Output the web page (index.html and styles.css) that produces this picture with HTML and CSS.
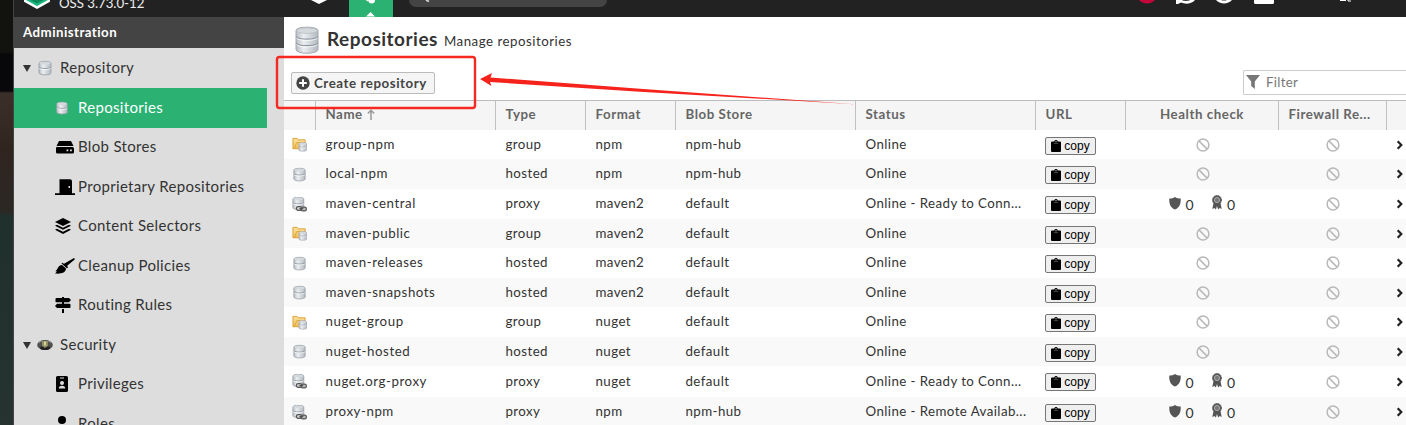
FILE: index.html
```
<!DOCTYPE html>
<html lang="en">
<head>
<meta charset="utf-8">
<title>Repositories</title>
<link rel="stylesheet" href="styles.css">
</head>
<body>
<svg class="defs" width="0" height="0">
  <defs>
    <linearGradient id="metal" x1="0" x2="1"><stop offset="0" stop-color="#b6bcc2"/><stop offset=".35" stop-color="#eceff1"/><stop offset="1" stop-color="#b2b8c0"/></linearGradient>
    <linearGradient id="gold" x1="0" y1="0" x2="0" y2="1"><stop offset="0" stop-color="#fbe3a0"/><stop offset="1" stop-color="#efbd52"/></linearGradient>
    <symbol id="db" viewBox="0 0 16 16">
      <path d="M2 3.2C2 .8 14 .8 14 3.2v9.700c0 2.600-12 2.600-12 0z" fill="url(#metal)" stroke="#9ca3aa" stroke-width=".9"/>
      <ellipse cx="8" cy="3.200" rx="5.500" ry="1.400" fill="#d3d9dd"/>
      <path d="M2.200 7.300c1.500 1.700 10.100 1.700 11.600 0" fill="none" stroke="#8d949c" stroke-width=".9"/>
      <path d="M2.200 8.300c1.500 1.700 10.100 1.700 11.600 0" fill="none" stroke="#fff" stroke-width=".7"/>
    </symbol>
    <symbol id="group" viewBox="0 0 16 16">
      <path d="M1 1.500h4.500l1 1.500H14v9.500H1z" fill="url(#gold)" stroke="#dc9f34"/>
      <path d="M2.500 12.500L5 6h9" fill="none" stroke="#dfa33d"/>
      <use href="#db" x="6" y="5" width="11" height="11"/>
    </symbol>
    <symbol id="proxy" viewBox="0 0 16 16">
      <use href="#db" x="-1" y="-1" width="15.500" height="15.500"/>
      <rect x="4.700" y="10.200" width="5.600" height="4" rx="1.700" fill="#ccc" stroke="#555" stroke-width="1.300"/>
      <rect x="9.700" y="10.700" width="5.600" height="4" rx="1.700" fill="#bbb" stroke="#555" stroke-width="1.300"/>
      <path d="M8 12.500h4" stroke="#444" stroke-width="1.200"/>
    </symbol>
    <symbol id="ban" viewBox="0 0 14 14"><circle cx="7" cy="7" r="5.900" fill="none" stroke="#b9b9b9" stroke-width="1.500"/><path d="M2.900 2.900l8.200 8.200" stroke="#b9b9b9" stroke-width="1.500"/></symbol>
    <symbol id="clip" viewBox="0 0 10 12"><path d="M1 1.500h2.200a1.850 1.850 0 0 1 3.600 0H9a1 1 0 0 1 1 1V11a1 1 0 0 1-1 1H1a1 1 0 0 1-1-1V2.500a1 1 0 0 1 1-1z"/><path d="M2.800 3.400h4.400" stroke="#777" stroke-width=".6"/><circle cx="5" cy="1.700" r=".6" fill="#ddd"/></symbol>
    <symbol id="chev" viewBox="0 0 8 10"><path d="M1.700 1.300L5.300 5 1.700 8.700" fill="none" stroke="#222" stroke-width="2.200"/></symbol>
    <symbol id="shield" viewBox="0 0 12 13"><path d="M6 0c1.600 1.200 3.500 1.600 5.700 1.600C11.900 6.500 11 10.500 6 12.600 1 10.500.1 6.500.3 1.600 2.500 1.600 4.400 1.200 6 0z" fill="#555"/></symbol>
    <symbol id="award" viewBox="0 0 12 15"><path d="M2.500 8L1.300 14l2.100-1 1.500 1.500L6 11l1.100 3.500L8.600 13l2.100 1L9.500 8z" fill="#555"/><circle cx="6" cy="5" r="4.500" fill="#555" stroke="#555" stroke-dasharray="1.400 .8"/><circle cx="6" cy="5" r="2.600" fill="#777" stroke="#bbb" stroke-width=".8"/></symbol>
  </defs>
</svg>
<div class="app">
  <div class="desk"></div>
  <div class="window">
    <header class="top">
      <div class="brand">
        <svg class="hex" width="26" height="9" viewBox="0 0 26 9"><path d="M1 0v.8L13 7.500 25 .8V0" fill="#1eb980" stroke="#fff" stroke-width="2.500"/><path d="M6 0l7 3.600L20 0z" fill="#0c8a5d"/></svg>
        <span class="version">OSS 3.73.0-12</span>
      </div>
      <svg class="cube" width="16" height="4" viewBox="0 0 16 4"><path d="M0 0h16L8 4z" fill="#fff"/></svg>
      <div class="mode">
        <svg width="44" height="17" viewBox="0 0 44 17"><path d="M19 0h7c.5 4.500-6.500 5-7 0z" fill="#fff"/><path d="M16.500 0h3l-.5 1.500z" fill="#fff"/><path d="M17 16.500L21.500 12l4.500 4.500z" fill="#fff"/></svg>
      </div>
      <div class="search"><svg width="100" height="4" viewBox="0 0 100 4"><path d="M17 0l3 1.500" stroke="#ddd" stroke-width="1.500"/><path d="M101 0v2" stroke="#999"/></svg></div>
      <svg class="tools" width="220" height="6" viewBox="0 0 220 6">
        <path d="M0 0h16c-4 4.500-12 4.500-16 0z" fill="#c5073c"/>
        <path d="M37 4V0h6c2 1.200 6 1.200 8 0h5c-3.500 4-9.500 4.500-14 2.500L39 4z" fill="#fff"/>
        <path d="M77 0h5c2 .8 4 .8 6 0h5c-4 4.500-12 4.500-16 0z" fill="#fff"/>
        <path d="M115 0h20v2.500q0 1.500-1.500 1.500h-17q-1.500 0-1.500-1.500z" fill="#fff"/>
        <path d="M201 .5h6M209 0v1h3" stroke="#fff" fill="none"/>
      </svg>
    </header>
    <div class="main">
      <nav class="side">
        <h2 class="side-title">Administration</h2>
        <div class="node root"><i class="tri"></i><svg class="ni" width="16" height="16"><use href="#db"/></svg><span class="tx">Repository</span></div>
        <div class="node leaf on"><svg class="ni" width="14" height="14"><use href="#db"/></svg><span class="tx">Repositories</span></div>
        <div class="node leaf short"><svg class="ni" width="20" height="14" viewBox="0 0 20 14"><path d="M4 1h12l2.500 5h-17z"/><path fill-rule="evenodd" d="M2 7h15.500q1.500 0 1.500 1.500V12q0 1.500-1.500 1.500h-15Q1 13.500 1 12V8q0-1 1-1zm9.500 2.500v1.800h1.800V9.500zm3.500 0v1.800h1.800V9.500z"/></svg><span class="tx">Blob Stores</span></div>
        <div class="node leaf"><svg class="ni" width="20" height="16" viewBox="0 0 20 16"><path fill-rule="evenodd" d="M4.500.3H15q2 0 2 2v11.900h3V16H0v-1.800h4.500zM13.500 7v2H15V7z"/></svg><span class="tx">Proprietary Repositories</span></div>
        <div class="node leaf short"><svg class="ni" width="16" height="16" viewBox="0 0 16 16"><path d="M8 0l8 4-8 4-8-4zM2 6.800L8 9.700l6-2.900 2 1-8 4-8-4zM2 10.800l6 2.900 6-2.900 2 1L8 16l-8-4.200z"/></svg><span class="tx">Content Selectors</span></div>
        <div class="node leaf"><svg class="ni" width="20" height="16" viewBox="0 0 20 16"><path d="M0 15.500l2-2-1.600-.2C3 11.500 2.500 7.500 7 7l4 3.600c0 4.400-5.500 5.500-11 4.900z"/><path d="M7 4.800l2 1L19 0l1 1.300-7.800 6.500.8 2-1.200.5L6.500 5.500z"/></svg><span class="tx">Cleanup Policies</span></div>
        <div class="node leaf short"><svg class="ni" width="16" height="16" viewBox="0 0 16 16"><path d="M7 0h2v1h5l2 2-2 2.200H1Q.5 5.200.5 4.500V2q0-1 1-1H7zM7 5.200h2v1.600h5.500q1 0 1 1v2.200q0 1-1 1H2L0 9l2-2.200h5zM7 12h2v4H7z"/></svg><span class="tx">Routing Rules</span></div>
        <div class="node root"><i class="tri"></i><svg class="ni" width="16" height="12" viewBox="0 0 16 12"><ellipse cx="8" cy="6" rx="7.800" ry="5" fill="#4e504b"/><ellipse cx="8" cy="9" rx="5" ry="2" fill="#222"/><path d="M5 2h6v5l-3 2-3-2z" fill="#8f8e68"/><path d="M8 2.500v4" stroke="#eeeaa0" stroke-width="1.500"/><path d="M2 4q2-2 3-2M11 2q2 0 3 2" stroke="#999" fill="none"/></svg><span class="tx">Security</span></div>
        <div class="node leaf short"><svg class="ni" width="14" height="16" viewBox="0 0 14 16"><path fill-rule="evenodd" d="M2.500 0h9q1.500 0 1.500 1.500v13q0 1.500-1.500 1.500h-9Q1 16 1 14.500v-13Q1 0 2.500 0zM5 1.500v1h4v-1z"/><circle cx="7" cy="7" r="2" fill="#ddd"/><path d="M3.800 12.500q0-2.700 3.200-2.700t3.200 2.700z" fill="#ddd"/></svg><span class="tx">Privileges</span></div>
        <div class="node leaf"><svg class="ni" width="14" height="16" viewBox="0 0 14 16"><circle cx="7" cy="4" r="4"/><path d="M0 16q0-7 7-7t7 7z"/></svg><span class="tx">Roles</span></div>
      </nav>
      <section class="content">
        <div class="heading"><svg width="28" height="29" viewBox="0 0 28 29"><path d="M3 4.500C3 0 25 0 25 4.500v19c0 5-22 5-22 0z" fill="url(#metal)" stroke="#a4abb2"/><ellipse cx="14" cy="4.700" rx="10.300" ry="2.700" fill="#d4d9dd" stroke="#b4babf" stroke-width=".7"/><path d="M3 10.500c2 3.500 20 3.500 22 0M3 17c2 3.500 20 3.500 22 0" fill="none" stroke="#8d96a0" stroke-width="1.200"/><path d="M3.500 12c2 3.200 19 3.200 21 0M3.500 18.500c2 3.200 19 3.200 21 0" fill="none" stroke="#fff" stroke-width=".8"/></svg><h1>Repositories</h1><span class="sub">Manage repositories</span></div>
        <div class="bar">
          <button class="create"><svg width="14" height="14" viewBox="0 0 14 14"><circle cx="7" cy="7" r="6.700" fill="#444"/><path d="M7 3.200v7.600M3.200 7h7.600" stroke="#fff" stroke-width="2"/></svg><span>Create repository</span></button>
          <div class="filter"><svg width="14" height="14" viewBox="0 0 14 14"><path d="M0 0h14L8.800 6.500V14L5.200 11V6.500z" fill="#777"/></svg><span>Filter</span></div>
        </div>
        <div class="cols row head"><b></b><b class="sorted">Name<svg width="8" height="11" viewBox="0 0 8 11"><path d="M4 11V1.500M.8 4.500L4 1.300l3.200 3.200" fill="none" stroke="#999" stroke-width="1.500"/></svg></b><b>Type</b><b>Format</b><b>Blob Store</b><b>Status</b><b>URL</b><b class="mid">Health check</b><b class="fw">Firewall Re...</b><b></b></div>
        <div class="cols row r29"><svg class="ri"><use href="#group"/></svg><span class="name">group-npm</span><span>group</span><span>npm</span><span>npm-hub</span><span>Online</span><button class="copy"><svg><use href="#clip"/></svg>copy</button><svg class="ban"><use href="#ban"/></svg><svg class="ban"><use href="#ban"/></svg><svg class="chev"><use href="#chev"/></svg></div>
        <div class="cols row alt"><svg class="ri"><use href="#db"/></svg><span class="name">local-npm</span><span>hosted</span><span>npm</span><span>npm-hub</span><span>Online</span><button class="copy"><svg><use href="#clip"/></svg>copy</button><svg class="ban"><use href="#ban"/></svg><svg class="ban"><use href="#ban"/></svg><svg class="chev"><use href="#chev"/></svg></div>
        <div class="cols row"><svg class="ri"><use href="#proxy"/></svg><span class="name">maven-central</span><span>proxy</span><span>maven2</span><span>default</span><span>Online - Ready to Conn...</span><button class="copy"><svg><use href="#clip"/></svg>copy</button><div class="health"><svg class="sh"><use href="#shield"/></svg><em>0</em><svg class="aw"><use href="#award"/></svg><em>0</em></div><svg class="ban"><use href="#ban"/></svg><svg class="chev"><use href="#chev"/></svg></div>
        <div class="cols row alt r29"><svg class="ri"><use href="#group"/></svg><span class="name">maven-public</span><span>group</span><span>maven2</span><span>default</span><span>Online</span><button class="copy"><svg><use href="#clip"/></svg>copy</button><svg class="ban"><use href="#ban"/></svg><svg class="ban"><use href="#ban"/></svg><svg class="chev"><use href="#chev"/></svg></div>
        <div class="cols row"><svg class="ri"><use href="#db"/></svg><span class="name">maven-releases</span><span>hosted</span><span>maven2</span><span>default</span><span>Online</span><button class="copy"><svg><use href="#clip"/></svg>copy</button><svg class="ban"><use href="#ban"/></svg><svg class="ban"><use href="#ban"/></svg><svg class="chev"><use href="#chev"/></svg></div>
        <div class="cols row alt r29"><svg class="ri"><use href="#db"/></svg><span class="name">maven-snapshots</span><span>hosted</span><span>maven2</span><span>default</span><span>Online</span><button class="copy"><svg><use href="#clip"/></svg>copy</button><svg class="ban"><use href="#ban"/></svg><svg class="ban"><use href="#ban"/></svg><svg class="chev"><use href="#chev"/></svg></div>
        <div class="cols row"><svg class="ri"><use href="#group"/></svg><span class="name">nuget-group</span><span>group</span><span>nuget</span><span>default</span><span>Online</span><button class="copy"><svg><use href="#clip"/></svg>copy</button><svg class="ban"><use href="#ban"/></svg><svg class="ban"><use href="#ban"/></svg><svg class="chev"><use href="#chev"/></svg></div>
        <div class="cols row alt r29"><svg class="ri"><use href="#db"/></svg><span class="name">nuget-hosted</span><span>hosted</span><span>nuget</span><span>default</span><span>Online</span><button class="copy"><svg><use href="#clip"/></svg>copy</button><svg class="ban"><use href="#ban"/></svg><svg class="ban"><use href="#ban"/></svg><svg class="chev"><use href="#chev"/></svg></div>
        <div class="cols row r31"><svg class="ri"><use href="#proxy"/></svg><span class="name">nuget.org-proxy</span><span>proxy</span><span>nuget</span><span>default</span><span>Online - Ready to Conn...</span><button class="copy"><svg><use href="#clip"/></svg>copy</button><div class="health"><svg class="sh"><use href="#shield"/></svg><em>0</em><svg class="aw"><use href="#award"/></svg><em>0</em></div><svg class="ban"><use href="#ban"/></svg><svg class="chev"><use href="#chev"/></svg></div>
        <div class="cols row alt"><svg class="ri"><use href="#proxy"/></svg><span class="name">proxy-npm</span><span>proxy</span><span>npm</span><span>npm-hub</span><span>Online - Remote Availab...</span><button class="copy"><svg><use href="#clip"/></svg>copy</button><div class="health"><svg class="sh"><use href="#shield"/></svg><em>0</em><svg class="aw"><use href="#award"/></svg><em>0</em></div><svg class="ban"><use href="#ban"/></svg><svg class="chev"><use href="#chev"/></svg></div>
      </section>
    </div>
  </div>
  <svg class="callout" width="1406" height="425" viewBox="0 0 1406 425"><rect x="277" y="57" width="198" height="51" rx="2.500" fill="none" stroke="#f5291f" stroke-width="2.400"/><path d="M480 79l12-6-1.500 4.500L640 88.800 855 104.200 640 91.800 490 82l1.500 4z" fill="#f5231b"/></svg>
</div>
</body>
</html>
```
FILE: styles.css
```
* { box-sizing: border-box; }
body { margin: 0; font-family: Lato, "Open Sans", sans-serif; color: #333; overflow: hidden; }
.defs { position: absolute; }
svg { display: block; flex: none; }
h1, h2 { margin: 0; }
.app { position: relative; display: flex; width: 1406px; height: 425px; overflow: hidden; background: #fff; }
.desk { width: 14px; flex: none; background: linear-gradient(#12130f 0 52px, #08080b 54px 91px, #3b3029 93px, #30241f 150px, #2b2824 212px, #20302d 216px, #263330 425px); border-right: 1px solid #444; }
.window { width: 1392px; flex: none; }
.top { display: flex; align-items: flex-start; height: 17px; background: #222; overflow: hidden; }
.brand { display: flex; width: 297px; padding-left: 10px; color: #eee; }
.version { margin: -5px 0 0 9px; font-size: 13.300px; line-height: 17px; letter-spacing: -.05px; }
.cube { margin-right: 22px; }
.mode { width: 44px; height: 17px; background: #2bb273; }
.search { width: 198px; height: 7px; margin-left: 16px; background: #444; border-radius: 0 0 12px 12px; }
.tools { margin-left: 532px; }
.main { display: flex; height: 408px; }
.side { width: 270px; flex: none; background: #ddd; overflow: hidden; }
.side-title { height: 31px; padding-left: 9px; background: #444; color: #fff; font-size: 13.300px; line-height: 31px; letter-spacing: .45px; }
.node { display: flex; align-items: center; height: 40px; font-size: 15px; letter-spacing: .32px; }
.root { padding-left: 9px; }
.leaf { padding-left: 41px; }
.short { height: 39px; }
.on { width: 253px; background: #2bb273; color: #fff; }
.tri { border: 4px solid transparent; border-top: 7px solid #333; border-bottom: 0; margin-right: 6px; }
.ni { overflow: visible; }
.root .tx { margin-left: 7px; }
.tx { padding-bottom: 2px; }
.leaf .ni { margin: -1px auto 0 0; }
.leaf .tx { width: 206px; flex: none; padding-bottom: 3px; }
.on .tx { width: 189px; }
.content { width: 1122px; flex: none; }
.heading { display: flex; height: 48px; padding: 9px 0 0 9px; }
.heading h1 { margin-left: 6px; font-size: 19px; line-height: 25px; letter-spacing: .5px; }
.sub { margin-left: 6px; font-size: 13.300px; line-height: 31px; letter-spacing: .5px; }
.bar { display: flex; justify-content: space-between; height: 35px; padding-left: 7px; }
.create { display: flex; align-items: center; gap: 4px; width: 144px; height: 22px; margin-top: 7px; padding: 0 4px 1px; border: 1px solid #bbb; border-radius: 2px; background: #f5f5f5; color: #444; font: bold 13.300px Lato, sans-serif; letter-spacing: .56px; white-space: nowrap; }
.filter { display: flex; align-items: center; gap: 6px; width: 163px; height: 25px; margin-top: 5px; padding: 0 0 1px 2px; border: 1px solid #ccc; border-right: 0; border-radius: 2px 0 0 2px; color: #777; font-size: 13.300px; letter-spacing: .3px; }
.cols { display: grid; grid-template-columns: 32px 180px 90px 90px 180px 180px 90px 153px 108px 19px; }
.row { align-items: center; height: 30px; font-size: 13.300px; letter-spacing: .42px; }
.row > span { padding-left: 9.500px; margin-top: -2px; white-space: nowrap; line-height: 20px; }
.row > .name { letter-spacing: .54px; }
.head { height: 30px; border-top: 1px solid #bbb; background: #f5f5f5; color: #666; letter-spacing: .55px; }
.head b { height: 29px; padding-left: 9.500px; line-height: 26px; border-right: 1px solid #c0c0c0; white-space: nowrap; }
.head b:last-child { border: 0; }
.head .sorted { display: flex; gap: 4px; }
.head .sorted svg { margin-top: 8px; }
.head .mid { padding: 0; text-align: center; }
.r29 { height: 29px; }
.r31 { height: 31px; }
.alt { background: #f9f9f9; }
.ri { width: 15px; height: 15px; margin-left: 8px; }
.copy { display: flex; align-self: start; align-items: center; justify-content: center; gap: 3px; width: 51px; height: 18px; margin: 7px 0 0 9px; padding: 0; border: 1px solid #767676; border-radius: 2px; background: #efefef; color: #000; font: 12px "Liberation Sans", Arial, sans-serif; }
.copy svg { width: 10px; height: 12px; }
.ban { width: 14px; height: 14px; justify-self: center; }
.chev { width: 8px; height: 10px; margin-left: 9px; }
.health { display: flex; align-items: center; justify-content: center; margin-top: 0; }
.health em { margin: 2px 0 0 4px; font-style: normal; font-size: 14px; line-height: 18px; }
.sh { width: 12px; height: 13px; margin-top: -2px; }
.aw { width: 12px; height: 15px; margin: -3px 0 0 17px; }
.callout { position: absolute; left: 0; top: 0; pointer-events: none; }
```
